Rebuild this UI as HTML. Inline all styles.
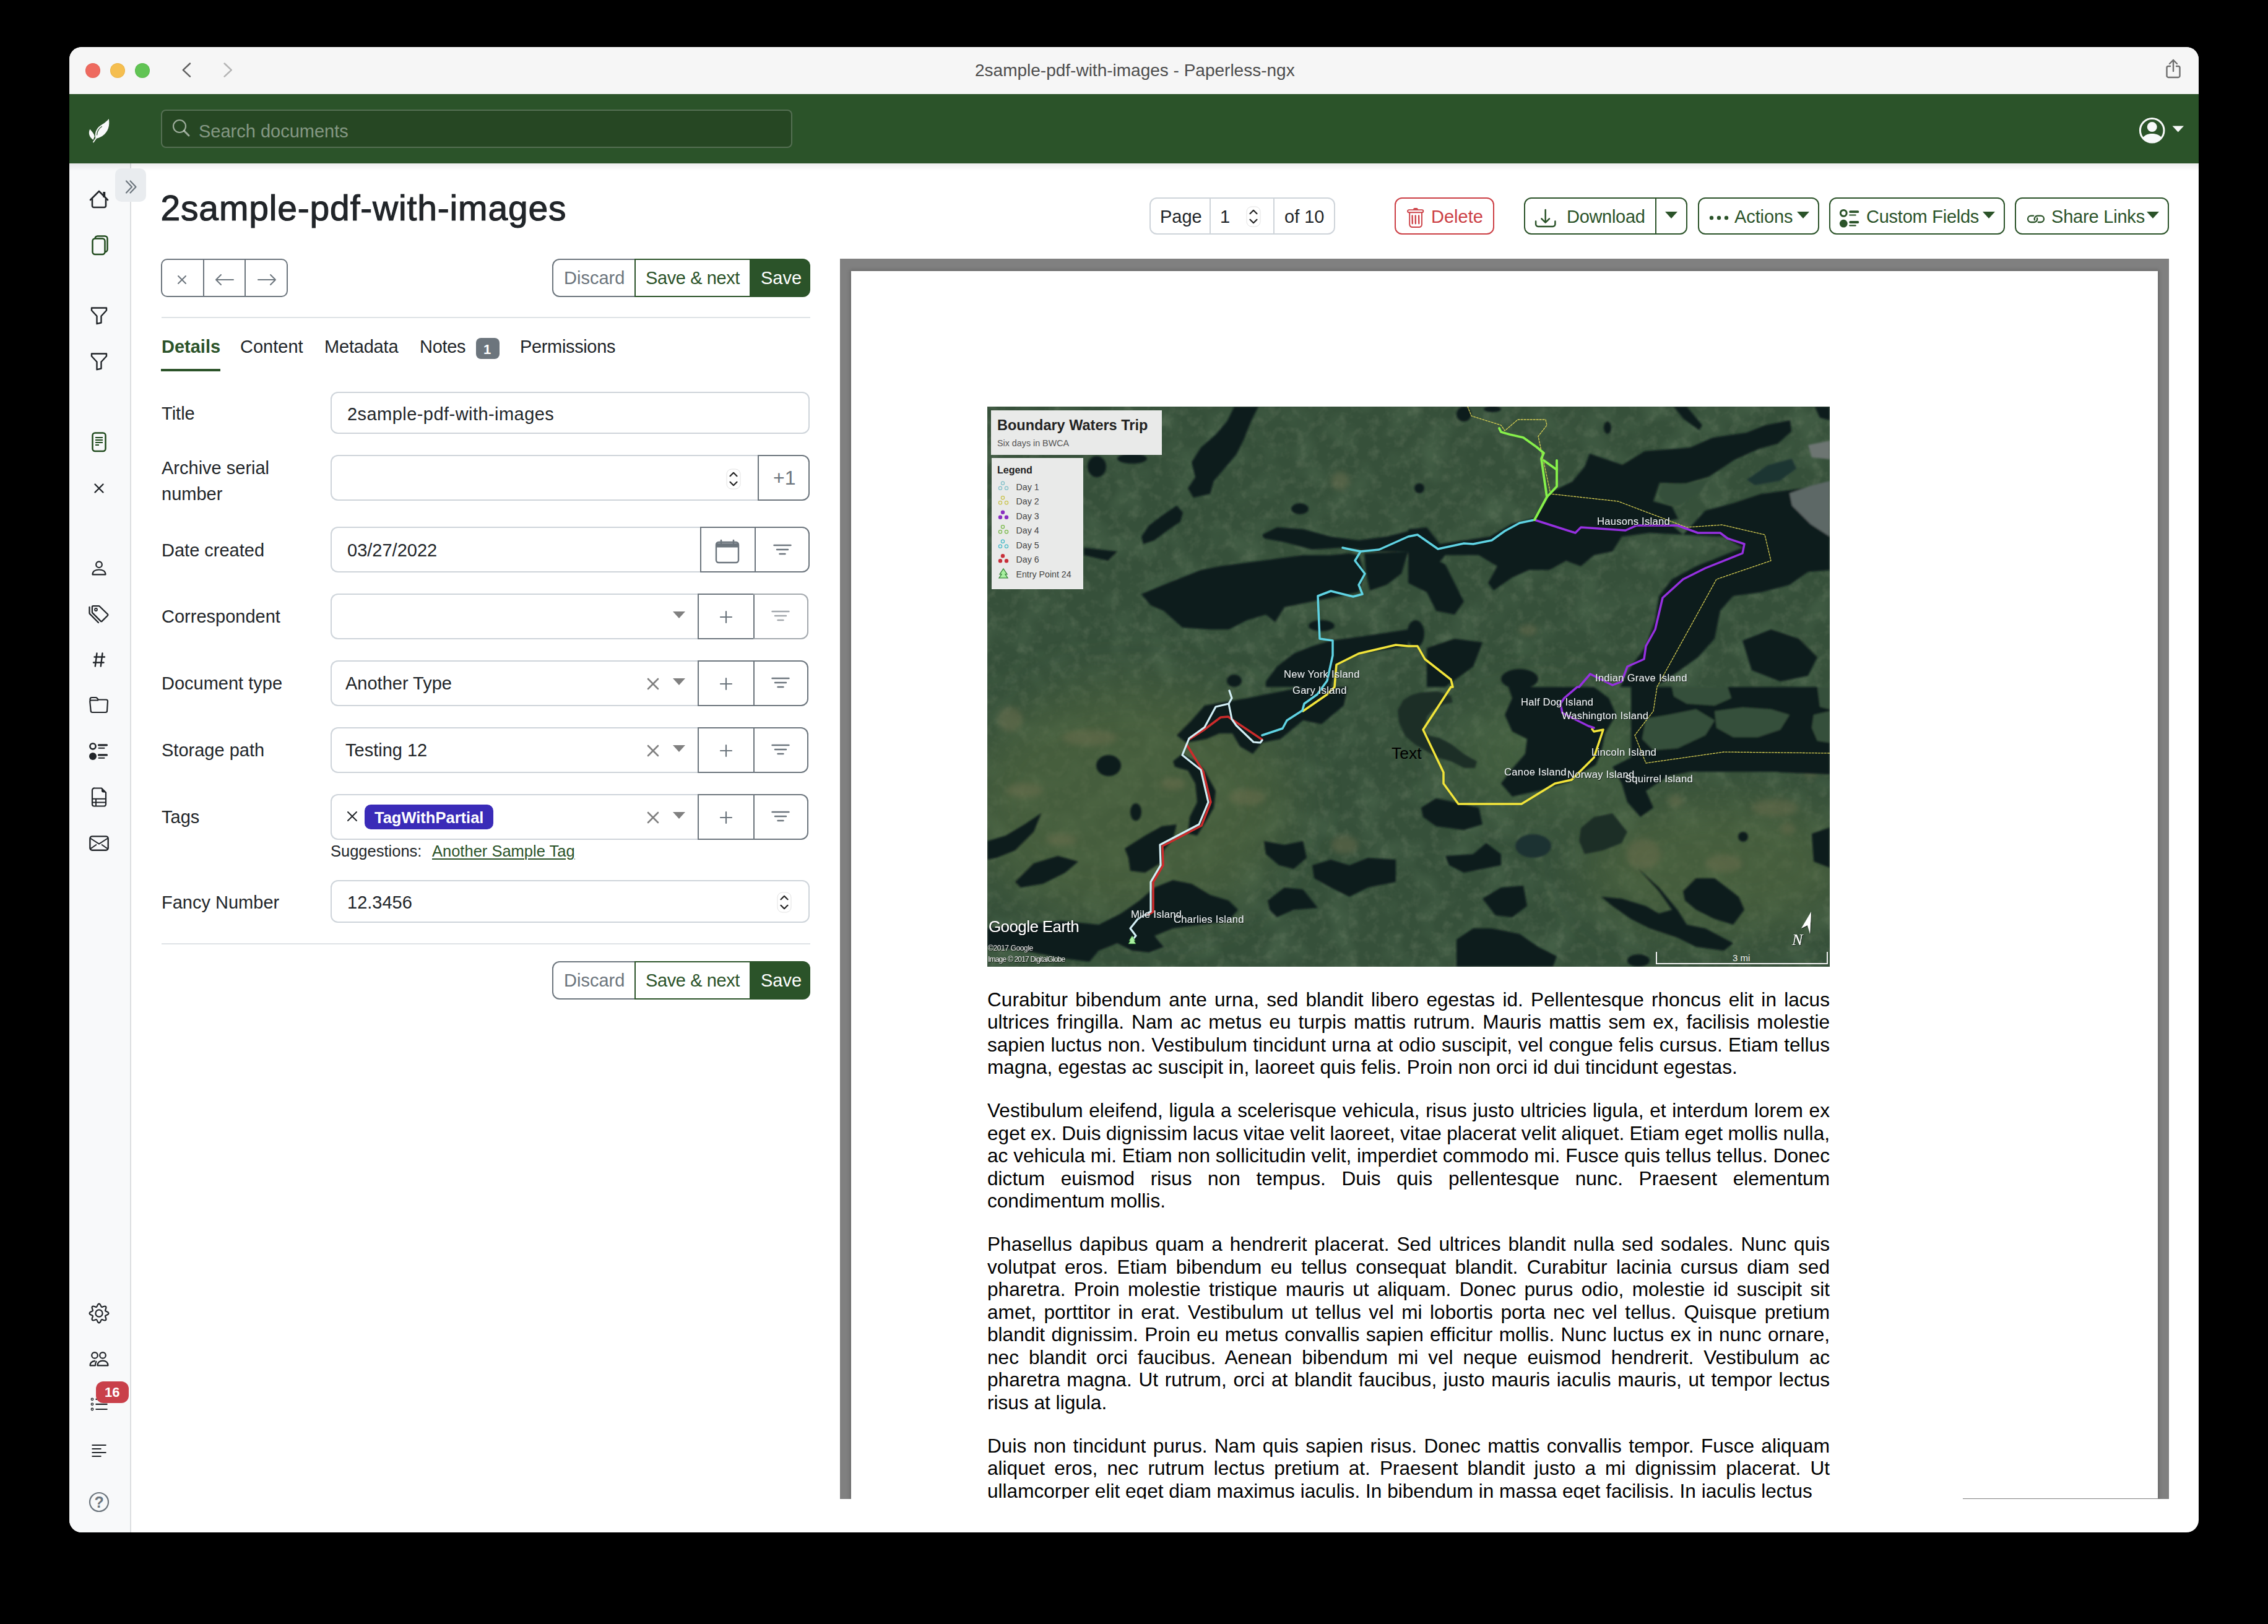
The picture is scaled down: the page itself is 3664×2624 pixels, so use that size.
<!DOCTYPE html><html><head><meta charset="utf-8"><style>
html,body{margin:0;padding:0;}
body{width:3664px;height:2624px;background:#000;overflow:hidden;position:relative;font-family:"Liberation Sans", sans-serif;}
.a{position:absolute;box-sizing:border-box;}
.t{position:absolute;white-space:nowrap;}
#win{position:absolute;left:112px;top:76px;width:3440px;height:2400px;border-radius:20px;overflow:hidden;background:#fff;}
#inner{position:absolute;left:-112px;top:-76px;width:3664px;height:2624px;}
</style></head><body><div id="win"><div id="inner">

<div class="a" style="left:112px;top:76px;width:3440px;height:76px;background:#f6f6f6;"></div>
<div class="a" style="left:138px;top:102px;width:24px;height:24px;border-radius:50%;background:#ee6a5f;box-shadow:inset 0 0 0 1px #d25a5055;"></div>
<div class="a" style="left:178px;top:102px;width:24px;height:24px;border-radius:50%;background:#f5be4f;box-shadow:inset 0 0 0 1px #d8a23c55;"></div>
<div class="a" style="left:218px;top:102px;width:24px;height:24px;border-radius:50%;background:#61c454;box-shadow:inset 0 0 0 1px #50a84355;"></div>
<svg class="a" style="left:290px;top:98px;" width="24" height="32" viewBox="0 0 24 32"><path d="M17 4.5 L5.8 15.1 L17 25.7" fill="none" stroke="#5f5f5f" stroke-width="2.5" stroke-linecap="round" stroke-linejoin="round"/></svg>
<svg class="a" style="left:356px;top:98px;" width="24" height="32" viewBox="0 0 24 32"><path d="M6.6 4.5 L17.8 15.1 L6.6 25.7" fill="none" stroke="#b4b4b4" stroke-width="2.5" stroke-linecap="round" stroke-linejoin="round"/></svg>
<div class="t" style="left:1575px;top:100.3px;font-size:28px;line-height:28px;color:#4d4d4d;font-weight:400;">2sample-pdf-with-images - Paperless-ngx</div>
<svg class="a" style="left:3496px;top:94px;" width="30" height="36" viewBox="0 0 30 36"><path d="M15 3 V21 M9 9 L15 3 L21 9" fill="none" stroke="#6e6e6e" stroke-width="2.4" stroke-linecap="round" stroke-linejoin="round"/><path d="M10 13 H7 a2.5 2.5 0 0 0 -2.5 2.5 V28.5 a2.5 2.5 0 0 0 2.5 2.5 H23 a2.5 2.5 0 0 0 2.5 -2.5 V15.5 a2.5 2.5 0 0 0 -2.5 -2.5 H20" fill="none" stroke="#6e6e6e" stroke-width="2.4" stroke-linecap="round"/></svg>
<div class="a" style="left:112px;top:152px;width:3440px;height:112px;background:#2b5329;"></div>
<div class="a" style="left:260px;top:177px;width:1020px;height:62px;background:#264723;border:2px solid rgba(255,255,255,0.22);border-radius:8px;"></div>
<div class="t" style="left:321px;top:197.5px;font-size:29px;line-height:29px;color:rgba(255,255,255,0.45);font-weight:400;">Search documents</div>
<svg class="a" style="left:278px;top:192px;" width="30" height="30" viewBox="0 0 30 30"><circle cx="12" cy="12" r="10" fill="none" stroke="rgba(255,255,255,0.55)" stroke-width="2.2"/><path d="M19.5 19.5 L27 27" stroke="rgba(255,255,255,0.55)" stroke-width="3" stroke-linecap="round"/></svg>
<div class="a" style="left:112px;top:264px;width:100px;height:2212px;background:#f8f9fa;border-right:2px solid #dcdee0;"></div>
<div class="a" style="left:112px;top:264px;width:3440px;height:12px;background:linear-gradient(rgba(0,0,0,0.07),rgba(0,0,0,0));"></div>
<div class="a" style="left:186px;top:272px;width:50px;height:54px;background:#e9ecef;border-radius:10px;"></div>
<svg class="a" style="left:200px;top:290px;" width="26" height="24" viewBox="0 0 26 24"><path d="M4 2.5 L13 12 L4 21.5 M10.5 2.5 L19.5 12 L10.5 21.5" fill="none" stroke="#6c757d" stroke-width="2.2" stroke-linecap="round" stroke-linejoin="round"/></svg>
<svg class="a" style="left:140px;top:304px;" width="40" height="36" viewBox="0 0 40 36"><path d="M6 19 L20 5 L34 19" fill="none" stroke="#212529" stroke-width="2.6" stroke-linecap="round" stroke-linejoin="round"/><path d="M9 17 V28.5 a2.5 2.5 0 0 0 2.5 2.5 H28.5 a2.5 2.5 0 0 0 2.5 -2.5 V17" fill="none" stroke="#212529" stroke-width="2.6"/><rect x="26.4" y="6" width="3.8" height="9" fill="#212529"/></svg>
<svg class="a" style="left:140px;top:374px;" width="40" height="42" viewBox="0 0 40 42"><rect x="13.5" y="7.5" width="20" height="25.5" rx="4" fill="none" stroke="#1f4a1c" stroke-width="2.5"/><rect x="9.5" y="11.5" width="20" height="25.5" rx="4" fill="#f8f9fa" stroke="#1f4a1c" stroke-width="2.5"/></svg>
<svg class="a" style="left:140px;top:492px;" width="40" height="34" viewBox="0 0 40 34"><path d="M8 5.5 H32 V9.5 L23.5 18.8 V29.5 L16.5 31.2 V18.8 L8 9.5 Z" fill="none" stroke="#212529" stroke-width="2.4" stroke-linejoin="round"/></svg>
<svg class="a" style="left:140px;top:566px;" width="40" height="34" viewBox="0 0 40 34"><path d="M8 5.5 H32 V9.5 L23.5 18.8 V29.5 L16.5 31.2 V18.8 L8 9.5 Z" fill="none" stroke="#212529" stroke-width="2.4" stroke-linejoin="round"/></svg>
<svg class="a" style="left:140px;top:694px;" width="40" height="40" viewBox="0 0 40 40"><rect x="9.5" y="5.5" width="21" height="29.5" rx="4" fill="none" stroke="#1f4a1c" stroke-width="2.5"/><path d="M14 13 H26 M14 17 H26 M14 21 H26 M14 25 H20" stroke="#1f4a1c" stroke-width="2"/></svg>
<svg class="a" style="left:140px;top:776px;" width="40" height="26" viewBox="0 0 40 26"><path d="M13.5 6.5 L26.5 19.5 M26.5 6.5 L13.5 19.5" stroke="#212529" stroke-width="2.4" stroke-linecap="round"/></svg>
<svg class="a" style="left:140px;top:900px;" width="40" height="34" viewBox="0 0 40 34"><circle cx="20" cy="12.2" r="4.8" fill="none" stroke="#212529" stroke-width="2.2"/><path d="M9.5 28.3 C9.5 23, 14 20.5, 20 20.5 C26 20.5, 30.5 23, 30.5 28.3 Z" fill="none" stroke="#212529" stroke-width="2.2" stroke-linejoin="round"/></svg>
<svg class="a" style="left:140px;top:972px;" width="40" height="40" viewBox="0 0 40 40"><path d="M10.5 7.1 H19.5 a2 2 0 0 1 1.4 0.6 L34 20.5 a1.5 1.5 0 0 1 0 2 L24.8 31.6 a1.5 1.5 0 0 1 -2.1 0 L9.5 18.4 a2 2 0 0 1 -0.6 -1.4 V8.7 a1.6 1.6 0 0 1 1.6 -1.6 Z" fill="none" stroke="#212529" stroke-width="2.3" stroke-linejoin="round"/><circle cx="15" cy="13" r="2" fill="none" stroke="#212529" stroke-width="1.8"/><path d="M4.5 8.8 V18.5 a2 2 0 0 0 0.6 1.4 L19 34" fill="none" stroke="#212529" stroke-width="2.3" stroke-linecap="round"/></svg>
<svg class="a" style="left:140px;top:1050px;" width="40" height="32" viewBox="0 0 40 32"><path d="M16.5 5.5 L13.8 26.5 M25.5 5.5 L22.8 26.5 M12.5 11.5 H29 M11 20.5 H27.5" stroke="#212529" stroke-width="2.4" stroke-linecap="round"/></svg>
<svg class="a" style="left:140px;top:1122px;" width="40" height="34" viewBox="0 0 40 34"><path d="M5.5 10 V8 a3 3 0 0 1 3 -3 H14.5 a3 3 0 0 1 2.2 1 L19 8.5 H31.5 a2.5 2.5 0 0 1 2.5 2.7 L33 26.5 a2.5 2.5 0 0 1 -2.5 2.5 H9.2 a2.5 2.5 0 0 1 -2.5 -2.3 L5.3 12 a2 2 0 0 1 2 -2.5 H19" fill="none" stroke="#212529" stroke-width="2.2" stroke-linejoin="round"/></svg>
<svg class="a" style="left:140px;top:1196px;" width="40" height="36" viewBox="0 0 40 36"><circle cx="10" cy="9.8" r="4.6" fill="none" stroke="#212529" stroke-width="2.6"/><circle cx="10" cy="25.9" r="6" fill="#212529"/><path d="M19.5 7.8 H32.5 M19.5 23.9 H32.5" stroke="#212529" stroke-width="3.2" stroke-linecap="round"/><path d="M19.5 12.7 H28.5 M19.5 28.8 H28.5" stroke="#212529" stroke-width="2" stroke-linecap="round"/></svg>
<svg class="a" style="left:140px;top:1268px;" width="40" height="40" viewBox="0 0 40 40"><path d="M13 5.5 H24 L31 12.5 V31.5 a3 3 0 0 1 -3 3 H12 a3 3 0 0 1 -3 -3 V9 a3.5 3.5 0 0 1 4 -3.5 Z" fill="none" stroke="#212529" stroke-width="2.2" stroke-linejoin="round"/><path d="M24 5.5 V9.5 a3 3 0 0 0 3 3 H31 Z" fill="#212529"/><path d="M9 22.7 H31 M9 28.6 H31 M15 22.7 V34.5" stroke="#212529" stroke-width="2"/></svg>
<svg class="a" style="left:140px;top:1346px;" width="40" height="32" viewBox="0 0 40 32"><rect x="5.4" y="5.4" width="29.3" height="22.4" rx="3.5" fill="none" stroke="#212529" stroke-width="2.4"/><path d="M6 8.5 L20 17.5 L34 8.5 M6 25.5 L16 18.5 M34 25.5 L24 18.5" fill="none" stroke="#212529" stroke-width="2"/></svg>
<svg class="a" style="left:140px;top:2102px;" width="40" height="40" viewBox="0 0 40 40"><polygon points="20.00,4.50 21.45,5.25 22.58,7.05 23.36,8.92 24.17,9.93 25.46,9.79 27.33,9.02 29.41,8.54 30.96,9.04 31.46,10.59 30.98,12.67 30.21,14.54 30.07,15.83 31.08,16.64 32.95,17.42 34.75,18.55 35.50,20.00 34.75,21.45 32.95,22.58 31.08,23.36 30.07,24.17 30.21,25.46 30.98,27.33 31.46,29.41 30.96,30.96 29.41,31.46 27.33,30.98 25.46,30.21 24.17,30.07 23.36,31.08 22.58,32.95 21.45,34.75 20.00,35.50 18.55,34.75 17.42,32.95 16.64,31.08 15.83,30.07 14.54,30.21 12.67,30.98 10.59,31.46 9.04,30.96 8.54,29.41 9.02,27.33 9.79,25.46 9.93,24.17 8.92,23.36 7.05,22.58 5.25,21.45 4.50,20.00 5.25,18.55 7.05,17.42 8.92,16.64 9.93,15.83 9.79,14.54 9.02,12.67 8.54,10.59 9.04,9.04 10.59,8.54 12.67,9.02 14.54,9.79 15.83,9.93 16.64,8.92 17.42,7.05 18.55,5.25" fill="none" stroke="#212529" stroke-width="2.2" stroke-linejoin="round"/><circle cx="20" cy="20" r="5.6" fill="none" stroke="#212529" stroke-width="2.2"/></svg>
<svg class="a" style="left:140px;top:2178px;" width="40" height="34" viewBox="0 0 40 34"><circle cx="13" cy="11.9" r="4.8" fill="none" stroke="#212529" stroke-width="2.2"/><circle cx="26" cy="11.9" r="4.8" fill="none" stroke="#212529" stroke-width="2.2"/><path d="M17.5 28.3 C17.5 23.5, 21 20.6, 26 20.6 C31 20.6, 34.5 23.5, 34.5 28.3 Z" fill="none" stroke="#212529" stroke-width="2.2" stroke-linejoin="round"/><path d="M14 20.8 C8.5 21.3, 5.5 24, 5.5 28.3 H14 C14 25, 14.5 23, 16 21.3" fill="none" stroke="#212529" stroke-width="2.2" stroke-linejoin="round"/></svg>
<svg class="a" style="left:140px;top:2250px;" width="40" height="36" viewBox="0 0 40 36"><circle cx="9" cy="10.8" r="1.7" fill="none" stroke="#212529" stroke-width="1.4"/><circle cx="9" cy="18.8" r="1.7" fill="none" stroke="#212529" stroke-width="1.4"/><circle cx="9" cy="27" r="1.7" fill="none" stroke="#212529" stroke-width="1.4"/><path d="M14.5 10.8 H33.5 M14.5 18.8 H33.5 M14.5 27 H33.5" stroke="#212529" stroke-width="2.2"/></svg>
<div class="a" style="left:155px;top:2232px;width:53px;height:35px;background:#c9404a;border-radius:12px;"></div>
<div class="t" style="left:169px;top:2238.9px;font-size:22px;line-height:22px;color:#fff;font-weight:700;">16</div>
<svg class="a" style="left:140px;top:2328px;" width="40" height="32" viewBox="0 0 40 32"><path d="M8.5 7 H31.5 M8.5 13 H23.5 M8.5 19 H31.5 M8.5 25 H23.5" stroke="#212529" stroke-width="2.2"/></svg>
<svg class="a" style="left:140px;top:2407px;" width="40" height="40" viewBox="0 0 40 40"><circle cx="20" cy="20" r="15" fill="none" stroke="#6c757d" stroke-width="2.2"/></svg>
<div class="t" style="left:152.5px;top:2414.8px;font-size:25px;line-height:25px;color:#6c757d;font-weight:700;">?</div>
<svg class="a" style="left:135px;top:180px;" width="50" height="60" viewBox="0 0 50 60"><path d="M19.5 43.8 C17.5 36, 20 28, 27 23 C31.5 20, 36.5 17.5, 40.8 12 C42.5 22, 40.5 33, 30 40 C26 42.5, 22.5 43.5, 19.5 43.8 Z" fill="#f8f9fa"/><path d="M21.5 38.5 C22 32, 25 27, 29.8 24.3" fill="none" stroke="#2b5329" stroke-width="1.2"/><path d="M10.3 28.8 C7.5 34, 8.5 41, 15.5 46 L17.8 40.5 C17 36, 14 33, 10.3 28.8 Z" fill="#f8f9fa"/><path d="M15.9 49.5 L20.5 43" stroke="#f8f9fa" stroke-width="1.8" stroke-linecap="round"/></svg>
<svg class="a" style="left:3452px;top:186px;" width="50" height="50" viewBox="0 0 50 50"><defs><clipPath id="uc"><circle cx="24.7" cy="24.8" r="19.3"/></clipPath></defs><circle cx="24.7" cy="24.8" r="19.3" fill="none" stroke="#f8f9fa" stroke-width="3"/><circle cx="24.7" cy="19.1" r="8" fill="#f8f9fa"/><path d="M6 45 L10.4 35.6 C14 31.5, 19 30, 24.7 29.9 C30.5 30, 35.5 31.5, 39.6 35.6 L44 45 Z" fill="#f8f9fa" clip-path="url(#uc)"/></svg>
<svg class="a" style="left:3508px;top:202px;" width="22" height="13" viewBox="0 0 22 13"><path d="M1.5 1.5 H20 L10.75 11.5 Z" fill="#f8f9fa"/></svg>
<div class="t" style="left:259.5px;top:307.7px;font-size:57px;line-height:57px;color:#212529;font-weight:400;letter-spacing:0.83px;-webkit-text-stroke:1.1px #212529;">2sample-pdf-with-images</div>
<div class="a" style="left:260px;top:418px;width:205px;height:62px;border:2px solid #6c757d;border-radius:10px;"></div>
<div class="a" style="left:328px;top:418px;width:2px;height:62px;background:#6c757d;"></div>
<div class="a" style="left:395px;top:418px;width:2px;height:62px;background:#6c757d;"></div>
<svg class="a" style="left:282px;top:440px;" width="24" height="24" viewBox="0 0 24 24"><path d="M6 6 L18 18 M18 6 L6 18" stroke="#6c757d" stroke-width="2" stroke-linecap="round"/></svg>
<svg class="a" style="left:346px;top:439px;" width="34" height="26" viewBox="0 0 34 26"><path d="M31 13 H3 M11 5 L3 13 L11 21" fill="none" stroke="#6c757d" stroke-width="2" stroke-linecap="round" stroke-linejoin="round"/></svg>
<svg class="a" style="left:414px;top:439px;" width="34" height="26" viewBox="0 0 34 26"><path d="M3 13 H31 M23 5 L31 13 L23 21" fill="none" stroke="#6c757d" stroke-width="2" stroke-linecap="round" stroke-linejoin="round"/></svg>
<div class="a" style="left:892px;top:418px;width:135px;height:62px;border:2px solid #6c757d;border-radius:12px 0 0 12px;"></div>
<div class="a" style="left:1025px;top:418px;width:188px;height:62px;border:2px solid #2b5329;"></div>
<div class="a" style="left:1211px;top:418px;width:98px;height:62px;background:#2b5329;border-radius:0 12px 12px 0;"></div>
<div class="t" style="left:911px;top:435.0px;font-size:29px;line-height:29px;color:#6c757d;font-weight:400;">Discard</div>
<div class="t" style="left:1043px;top:435.0px;font-size:29px;line-height:29px;color:#2b5329;font-weight:400;letter-spacing:-0.4px;">Save &amp; next</div>
<div class="t" style="left:1229px;top:435.0px;font-size:29px;line-height:29px;color:#fff;font-weight:400;">Save</div>
<div class="a" style="left:261px;top:512px;width:1048px;height:2px;background:#dee2e6;"></div>
<div class="t" style="left:261px;top:546.0px;font-size:29px;line-height:29px;color:#2b5329;font-weight:700;">Details</div>
<div class="a" style="left:260px;top:596px;width:96px;height:4px;background:#2b5329;"></div>
<div class="t" style="left:388px;top:546.0px;font-size:29px;line-height:29px;color:#212529;font-weight:400;">Content</div>
<div class="t" style="left:524px;top:546.0px;font-size:29px;line-height:29px;color:#212529;font-weight:400;letter-spacing:-0.2px;">Metadata</div>
<div class="t" style="left:678px;top:546.0px;font-size:29px;line-height:29px;color:#212529;font-weight:400;letter-spacing:-0.3px;">Notes</div>
<div class="a" style="left:769px;top:546px;width:38px;height:34px;background:#6c757d;border-radius:8px;"></div>
<div class="t" style="left:781px;top:554.4px;font-size:22px;line-height:22px;color:#fff;font-weight:700;">1</div>
<div class="t" style="left:840px;top:546.0px;font-size:29px;line-height:29px;color:#212529;font-weight:400;letter-spacing:-0.35px;">Permissions</div>
<div class="t" style="left:261px;top:653.5px;font-size:29px;line-height:29px;color:#212529;font-weight:400;">Title</div>
<div class="a" style="left:534px;top:633px;width:774px;height:68px;border:2px solid #ced4da;border-radius:12px;"></div>
<div class="t" style="left:561px;top:654.5px;font-size:29px;line-height:29px;color:#212529;font-weight:400;letter-spacing:0.45px;">2sample-pdf-with-images</div>
<div class="t" style="left:261px;top:742.0px;font-size:29px;line-height:29px;color:#212529;font-weight:400;">Archive serial</div>
<div class="t" style="left:261px;top:783.5px;font-size:29px;line-height:29px;color:#212529;font-weight:400;">number</div>
<div class="a" style="left:534px;top:735px;width:692px;height:74px;border:2px solid #ced4da;border-right:none;border-radius:12px 0 0 12px;"></div>
<div class="a" style="left:1224px;top:735px;width:84px;height:74px;border:2px solid #6c757d;border-radius:0 12px 12px 0;"></div>
<div class="t" style="left:1249px;top:755.9px;font-size:32px;line-height:32px;color:#6c757d;font-weight:400;">+1</div>
<svg class="a" style="left:1173px;top:757px;" width="24" height="34" viewBox="0 0 24 34"><rect x="1" y="1" width="22" height="32" rx="8" fill="#fff" stroke="#e2e2e2" stroke-width="1"/><path d="M6.5 12.2 L12 6.8 L17.5 12.2 M6.5 21.8 L12 27.2 L17.5 21.8" fill="none" stroke="#222" stroke-width="2.2" stroke-linecap="round" stroke-linejoin="round"/></svg>
<div class="t" style="left:261px;top:875.0px;font-size:29px;line-height:29px;color:#212529;font-weight:400;">Date created</div>
<div class="a" style="left:534px;top:851px;width:599px;height:74px;border:2px solid #ced4da;border-right:none;border-radius:12px 0 0 12px;"></div>
<div class="a" style="left:1131px;top:851px;width:90px;height:74px;border:2px solid #6c757d;border-radius:0;"></div>
<div class="a" style="left:1219px;top:851px;width:89px;height:74px;border:2px solid #6c757d;border-radius:0 12px 12px 0;"></div>
<div class="t" style="left:561px;top:875.0px;font-size:29px;line-height:29px;color:#212529;font-weight:400;">03/27/2022</div>
<svg class="a" style="left:1154px;top:868px;" width="42" height="44" viewBox="0 0 42 44"><rect x="3" y="8" width="36" height="33" rx="4" fill="none" stroke="#6c757d" stroke-width="2.4"/><path d="M3.5 13 H38.5" stroke="#6c757d" stroke-width="7"/><path d="M11 5 V9 M31 5 V9" stroke="#6c757d" stroke-width="2.6" stroke-linecap="round"/></svg>
<svg class="a" style="left:1248px;top:878px;" width="32" height="20" viewBox="0 0 32 20"><path d="M2.5 3 H29.5 M7 10 H25 M11.5 17 H20.5" stroke="#6c757d" stroke-width="2.4" stroke-linecap="round"/></svg>
<div class="t" style="left:261px;top:981.5px;font-size:29px;line-height:29px;color:#212529;font-weight:400;">Correspondent</div>
<div class="a" style="left:534px;top:959px;width:595px;height:74px;border:2px solid #ced4da;border-right:none;border-radius:12px 0 0 12px;"></div>
<div class="a" style="left:1127px;top:959px;width:92px;height:74px;border:2px solid #6c757d;border-radius:0;"></div>
<div class="a" style="left:1217px;top:959px;width:89px;height:74px;border:2px solid #a3a8ad;border-left:none;border-radius:0 12px 12px 0;"></div>
<svg class="a" style="left:1162px;top:986.0px;" width="22" height="22" viewBox="0 0 22 22"><path d="M11 2 V20 M2 11 H20" stroke="#6c757d" stroke-width="2.2" stroke-linecap="round"/></svg>
<svg class="a" style="left:1245px;top:985.0px;" width="32" height="20" viewBox="0 0 32 20"><path d="M2.5 3 H29.5 M7 10 H25 M11.5 17 H20.5" stroke="#a3a8ad" stroke-width="2.4" stroke-linecap="round"/></svg>
<svg class="a" style="left:1087px;top:988.0px;" width="20" height="12" viewBox="0 0 20 12"><path d="M0 0 H20 L10 11 Z" fill="#808080"/></svg>
<div class="t" style="left:261px;top:1089.5px;font-size:29px;line-height:29px;color:#212529;font-weight:400;">Document type</div>
<div class="a" style="left:534px;top:1067px;width:595px;height:74px;border:2px solid #ced4da;border-right:none;border-radius:12px 0 0 12px;"></div>
<div class="a" style="left:1127px;top:1067px;width:92px;height:74px;border:2px solid #6c757d;border-radius:0;"></div>
<div class="a" style="left:1217px;top:1067px;width:89px;height:74px;border:2px solid #6c757d;border-left:none;border-radius:0 12px 12px 0;"></div>
<svg class="a" style="left:1162px;top:1094.0px;" width="22" height="22" viewBox="0 0 22 22"><path d="M11 2 V20 M2 11 H20" stroke="#6c757d" stroke-width="2.2" stroke-linecap="round"/></svg>
<svg class="a" style="left:1245px;top:1093.0px;" width="32" height="20" viewBox="0 0 32 20"><path d="M2.5 3 H29.5 M7 10 H25 M11.5 17 H20.5" stroke="#6c757d" stroke-width="2.4" stroke-linecap="round"/></svg>
<svg class="a" style="left:1087px;top:1096.0px;" width="20" height="12" viewBox="0 0 20 12"><path d="M0 0 H20 L10 11 Z" fill="#808080"/></svg>
<svg class="a" style="left:1045px;top:1095.0px;" width="20" height="20" viewBox="0 0 20 20"><path d="M2 2 L18 18 M18 2 L2 18" stroke="#808080" stroke-width="2.6" stroke-linecap="round"/></svg>
<div class="t" style="left:558px;top:1090.0px;font-size:29px;line-height:29px;color:#212529;font-weight:400;">Another Type</div>
<div class="t" style="left:261px;top:1197.5px;font-size:29px;line-height:29px;color:#212529;font-weight:400;">Storage path</div>
<div class="a" style="left:534px;top:1175px;width:595px;height:74px;border:2px solid #ced4da;border-right:none;border-radius:12px 0 0 12px;"></div>
<div class="a" style="left:1127px;top:1175px;width:92px;height:74px;border:2px solid #6c757d;border-radius:0;"></div>
<div class="a" style="left:1217px;top:1175px;width:89px;height:74px;border:2px solid #6c757d;border-left:none;border-radius:0 12px 12px 0;"></div>
<svg class="a" style="left:1162px;top:1202.0px;" width="22" height="22" viewBox="0 0 22 22"><path d="M11 2 V20 M2 11 H20" stroke="#6c757d" stroke-width="2.2" stroke-linecap="round"/></svg>
<svg class="a" style="left:1245px;top:1201.0px;" width="32" height="20" viewBox="0 0 32 20"><path d="M2.5 3 H29.5 M7 10 H25 M11.5 17 H20.5" stroke="#6c757d" stroke-width="2.4" stroke-linecap="round"/></svg>
<svg class="a" style="left:1087px;top:1204.0px;" width="20" height="12" viewBox="0 0 20 12"><path d="M0 0 H20 L10 11 Z" fill="#808080"/></svg>
<svg class="a" style="left:1045px;top:1203.0px;" width="20" height="20" viewBox="0 0 20 20"><path d="M2 2 L18 18 M18 2 L2 18" stroke="#808080" stroke-width="2.6" stroke-linecap="round"/></svg>
<div class="t" style="left:558px;top:1198.0px;font-size:29px;line-height:29px;color:#212529;font-weight:400;">Testing 12</div>
<div class="t" style="left:261px;top:1305.5px;font-size:29px;line-height:29px;color:#212529;font-weight:400;">Tags</div>
<div class="a" style="left:534px;top:1283px;width:595px;height:74px;border:2px solid #ced4da;border-right:none;border-radius:12px 0 0 12px;"></div>
<div class="a" style="left:1127px;top:1283px;width:92px;height:74px;border:2px solid #6c757d;border-radius:0;"></div>
<div class="a" style="left:1217px;top:1283px;width:89px;height:74px;border:2px solid #6c757d;border-left:none;border-radius:0 12px 12px 0;"></div>
<svg class="a" style="left:1162px;top:1310.0px;" width="22" height="22" viewBox="0 0 22 22"><path d="M11 2 V20 M2 11 H20" stroke="#6c757d" stroke-width="2.2" stroke-linecap="round"/></svg>
<svg class="a" style="left:1245px;top:1309.0px;" width="32" height="20" viewBox="0 0 32 20"><path d="M2.5 3 H29.5 M7 10 H25 M11.5 17 H20.5" stroke="#6c757d" stroke-width="2.4" stroke-linecap="round"/></svg>
<svg class="a" style="left:1087px;top:1312.0px;" width="20" height="12" viewBox="0 0 20 12"><path d="M0 0 H20 L10 11 Z" fill="#808080"/></svg>
<svg class="a" style="left:1045px;top:1311.0px;" width="20" height="20" viewBox="0 0 20 20"><path d="M2 2 L18 18 M18 2 L2 18" stroke="#808080" stroke-width="2.6" stroke-linecap="round"/></svg>
<svg class="a" style="left:559px;top:1309px;" width="20" height="20" viewBox="0 0 20 20"><path d="M3 3 L17 17 M17 3 L3 17" stroke="#212529" stroke-width="2" stroke-linecap="round"/></svg>
<div class="a" style="left:589px;top:1300px;width:208px;height:40px;background:#3a2bb8;border-radius:10px;"></div>
<div class="t" style="left:605px;top:1309.4px;font-size:25.5px;line-height:25.5px;color:#fff;font-weight:700;">TagWithPartial</div>
<div class="t" style="left:534px;top:1363.0px;font-size:25.5px;line-height:25.5px;color:#212529;font-weight:400;">Suggestions:</div>
<div class="t" style="left:698px;top:1363.0px;font-size:25.5px;line-height:25.5px;color:#2b5329;font-weight:400;"><u style="text-underline-offset:3px;text-decoration-thickness:2px;">Another Sample Tag</u></div>
<div class="t" style="left:261px;top:1443.5px;font-size:29px;line-height:29px;color:#212529;font-weight:400;">Fancy Number</div>
<div class="a" style="left:534px;top:1422px;width:774px;height:69px;border:2px solid #ced4da;border-radius:12px;"></div>
<div class="t" style="left:561px;top:1444.0px;font-size:29px;line-height:29px;color:#212529;font-weight:400;">12.3456</div>
<svg class="a" style="left:1255px;top:1441px;" width="24" height="34" viewBox="0 0 24 34"><rect x="1" y="1" width="22" height="32" rx="8" fill="#fff" stroke="#e2e2e2" stroke-width="1"/><path d="M6.5 12.2 L12 6.8 L17.5 12.2 M6.5 21.8 L12 27.2 L17.5 21.8" fill="none" stroke="#222" stroke-width="2.2" stroke-linecap="round" stroke-linejoin="round"/></svg>
<div class="a" style="left:261px;top:1524px;width:1048px;height:2px;background:#dee2e6;"></div>
<div class="a" style="left:892px;top:1553px;width:135px;height:62px;border:2px solid #6c757d;border-radius:12px 0 0 12px;"></div>
<div class="a" style="left:1025px;top:1553px;width:188px;height:62px;border:2px solid #2b5329;"></div>
<div class="a" style="left:1211px;top:1553px;width:98px;height:62px;background:#2b5329;border-radius:0 12px 12px 0;"></div>
<div class="t" style="left:911px;top:1570.0px;font-size:29px;line-height:29px;color:#6c757d;font-weight:400;">Discard</div>
<div class="t" style="left:1043px;top:1570.0px;font-size:29px;line-height:29px;color:#2b5329;font-weight:400;letter-spacing:-0.4px;">Save &amp; next</div>
<div class="t" style="left:1229px;top:1570.0px;font-size:29px;line-height:29px;color:#fff;font-weight:400;">Save</div>
<div class="a" style="left:1857px;top:319px;width:300px;height:60px;border:2px solid #ced4da;border-radius:12px;"></div>
<div class="a" style="left:1954px;top:319px;width:2px;height:60px;background:#ced4da;"></div>
<div class="a" style="left:2057px;top:319px;width:2px;height:60px;background:#ced4da;"></div>
<div class="t" style="left:1874px;top:336.0px;font-size:29px;line-height:29px;color:#212529;font-weight:400;">Page</div>
<div class="t" style="left:1971px;top:336.0px;font-size:29px;line-height:29px;color:#212529;font-weight:400;">1</div>
<svg class="a" style="left:2013px;top:333px;" width="24" height="34" viewBox="0 0 24 34"><rect x="1" y="1" width="22" height="32" rx="8" fill="#fff" stroke="#e2e2e2" stroke-width="1"/><path d="M6.5 12.2 L12 6.8 L17.5 12.2 M6.5 21.8 L12 27.2 L17.5 21.8" fill="none" stroke="#222" stroke-width="2.2" stroke-linecap="round" stroke-linejoin="round"/></svg>
<div class="t" style="left:2075px;top:336.0px;font-size:29px;line-height:29px;color:#212529;font-weight:400;">of 10</div>
<div class="a" style="left:2253px;top:319px;width:161px;height:60px;border:2px solid #cc3f45;border-radius:12px;"></div>
<svg class="a" style="left:2270px;top:333px;" width="34" height="38" viewBox="0 0 34 38"><rect x="4.1" y="6.1" width="25.2" height="4.2" rx="2.1" fill="none" stroke="#cc3f45" stroke-width="1.9"/><path d="M12.8 5.4 C13.2 3.6, 14.3 3, 17 3 C19.7 3, 20.8 3.6, 21.2 5.4 Z" fill="#cc3f45"/><path d="M7.2 11 V29.6 a4.4 4.4 0 0 0 4.4 4.4 H22.6 a4.4 4.4 0 0 0 4.4 -4.4 V11" fill="none" stroke="#cc3f45" stroke-width="1.9"/><path d="M11.6 15.3 L11.8 28.3 M16.7 15.3 L16.9 28.3 M22.1 15.3 L22.3 28.3" stroke="#cc3f45" stroke-width="2.3" stroke-linecap="round"/></svg>
<div class="t" style="left:2312px;top:336.0px;font-size:29px;line-height:29px;color:#cc3f45;font-weight:400;">Delete</div>
<div class="a" style="left:2462px;top:319px;width:264px;height:60px;border:2px solid #2b5329;border-radius:12px;"></div>
<div class="a" style="left:2674px;top:319px;width:2px;height:60px;background:#2b5329;"></div>
<svg class="a" style="left:2479px;top:337px;" width="36" height="32" viewBox="0 0 36 32"><path d="M17.7 2 V22.5 M11.4 16.3 L17.7 22.6 L24 16.3" fill="none" stroke="#2b5329" stroke-width="2.5" stroke-linecap="round" stroke-linejoin="round"/><path d="M2.1 20.6 V25.3 a3.6 3.6 0 0 0 3.6 3.6 H29.8 a3.6 3.6 0 0 0 3.6 -3.6 V20.6" fill="none" stroke="#2b5329" stroke-width="2.5" stroke-linecap="round"/></svg>
<div class="t" style="left:2531px;top:336.0px;font-size:29px;line-height:29px;color:#2b5329;font-weight:400;letter-spacing:-0.3px;">Download</div>
<svg class="a" style="left:2690px;top:342px;" width="20" height="12" viewBox="0 0 20 12"><path d="M0 0 H20 L10 11 Z" fill="#2b5329"/></svg>
<div class="a" style="left:2743px;top:319px;width:196px;height:60px;border:2px solid #2b5329;border-radius:12px;"></div>
<svg class="a" style="left:2761px;top:347px;" width="32" height="10" viewBox="0 0 32 10"><circle cx="4" cy="5" r="3.2" fill="#2b5329"/><circle cx="16" cy="5" r="3.2" fill="#2b5329"/><circle cx="28" cy="5" r="3.2" fill="#2b5329"/></svg>
<div class="t" style="left:2802px;top:336.0px;font-size:29px;line-height:29px;color:#2b5329;font-weight:400;letter-spacing:-0.1px;">Actions</div>
<svg class="a" style="left:2903px;top:342px;" width="20" height="12" viewBox="0 0 20 12"><path d="M0 0 H20 L10 11 Z" fill="#2b5329"/></svg>
<div class="a" style="left:2955px;top:319px;width:284px;height:60px;border:2px solid #2b5329;border-radius:12px;"></div>
<svg class="a" style="left:2971px;top:337px;" width="34" height="32" viewBox="0 0 34 32"><circle cx="7.3" cy="7.4" r="4.9" fill="none" stroke="#2b5329" stroke-width="3"/><circle cx="7.3" cy="24.2" r="6.4" fill="#2b5329"/><path d="M18.1 5.2 H30.4 M18.1 22 H30.4" stroke="#2b5329" stroke-width="3.8" stroke-linecap="round"/><path d="M17.3 10.5 H26.7 M17.3 27.4 H26.7" stroke="#2b5329" stroke-width="2.2" stroke-linecap="round"/></svg>
<div class="t" style="left:3015px;top:336.0px;font-size:29px;line-height:29px;color:#2b5329;font-weight:400;letter-spacing:-0.25px;">Custom Fields</div>
<svg class="a" style="left:3203px;top:342px;" width="20" height="12" viewBox="0 0 20 12"><path d="M0 0 H20 L10 11 Z" fill="#2b5329"/></svg>
<div class="a" style="left:3255px;top:319px;width:249px;height:60px;border:2px solid #2b5329;border-radius:12px;"></div>
<svg class="a" style="left:3272px;top:344px;" width="34" height="18" viewBox="0 0 34 18"><path d="M13.2 4.6 H9.2 a5.2 5.2 0 0 0 0 10.4 H14 a5.2 5.2 0 0 0 5.1 -6.6" fill="none" stroke="#2b5329" stroke-width="2.3" stroke-linecap="round"/><path d="M20.8 15 H24.8 a5.2 5.2 0 0 0 0 -10.4 H20 a5.2 5.2 0 0 0 -5.1 6.6" fill="none" stroke="#2b5329" stroke-width="2.3" stroke-linecap="round"/></svg>
<div class="t" style="left:3314px;top:336.0px;font-size:29px;line-height:29px;color:#2b5329;font-weight:400;letter-spacing:-0.2px;">Share Links</div>
<svg class="a" style="left:3468px;top:342px;" width="20" height="12" viewBox="0 0 20 12"><path d="M0 0 H20 L10 11 Z" fill="#2b5329"/></svg>
<div class="a" style="left:1357px;top:418px;width:2147px;height:2004px;background:#808080;overflow:hidden;"></div>
<div class="a" style="left:1375px;top:438px;width:2111px;height:1984px;background:#fff;box-shadow:0 0 6px 2px rgba(0,0,0,0.18);clip-path:inset(-12px -12px 0 -12px);"></div>
<div class="a" style="left:3171px;top:2421px;width:315px;height:1px;background:#808080;"></div>
<svg class="a" style="left:1595px;top:657px;font-family:'Liberation Sans',sans-serif;" width="1361" height="905" viewBox="0 0 1361 905"><defs><filter id="tex" x="0" y="0" width="100%" height="100%"><feTurbulence type="fractalNoise" baseFrequency="0.06" numOctaves="3" seed="7"/><feColorMatrix type="matrix" values="0 0 0 0 0.42  0 0 0 0 0.45  0 0 0 0 0.32  0 0 0 1.6 -0.75"/></filter><filter id="tex2" x="0" y="0" width="100%" height="100%"><feTurbulence type="fractalNoise" baseFrequency="0.02" numOctaves="2" seed="3"/><feColorMatrix type="matrix" values="0 0 0 0 0.1  0 0 0 0 0.18  0 0 0 0 0.1  0 0 0 1.6 -0.7"/></filter><filter id="soft"><feGaussianBlur stdDeviation="1.6"/></filter><filter id="big" x="-50%" y="-50%" width="200%" height="200%"><feGaussianBlur stdDeviation="40"/></filter><filter id="soft2" x="-50%" y="-50%" width="200%" height="200%"><feGaussianBlur stdDeviation="5"/></filter><filter id="lbl" x="-10%" y="-30%" width="120%" height="160%"><feDropShadow dx="0.6" dy="0.8" stdDeviation="0.7" flood-color="#000" flood-opacity="0.95"/></filter></defs><rect x="0" y="0" width="1361" height="905" fill="#36503a"/><rect x="0" y="0" width="1361" height="905" filter="url(#tex2)" opacity="0.6"/><rect x="0" y="0" width="1361" height="905" filter="url(#tex)" opacity="0.22"/><g filter="url(#big)" opacity="0.55"><ellipse cx="230" cy="640" rx="260" ry="190" fill="#52693f"/><ellipse cx="1180" cy="740" rx="220" ry="110" fill="#53693f"/><ellipse cx="900" cy="560" rx="150" ry="90" fill="#4d6a45"/></g><g filter="url(#soft2)" fill="#6f6f50" opacity="0.45"><ellipse cx="874" cy="361" rx="15" ry="9"/><ellipse cx="1060" cy="723" rx="28" ry="25"/><ellipse cx="1112" cy="637" rx="12" ry="10"/><ellipse cx="1273" cy="648" rx="38" ry="14"/><ellipse cx="1293" cy="682" rx="12" ry="10"/><ellipse cx="1190" cy="738" rx="30" ry="14"/><ellipse cx="165" cy="535" rx="45" ry="13"/><ellipse cx="37" cy="505" rx="20" ry="20"/><ellipse cx="420" cy="631" rx="30" ry="13"/><ellipse cx="577" cy="708" rx="22" ry="15"/><ellipse cx="570" cy="120" rx="15" ry="15"/><ellipse cx="120" cy="700" rx="25" ry="10"/><ellipse cx="60" cy="620" rx="30" ry="12"/><ellipse cx="300" cy="610" rx="20" ry="10"/><ellipse cx="1330" cy="570" rx="20" ry="30"/></g><g filter="url(#soft)"><polygon points="399,0 438,0 426,24 414,54 402,78 384,99 366,120 360,141 333,147 324,132 336,114 330,90 345,66 369,45 387,24" fill="#0e1a1c" /><polygon points="249,210 261,192 285,174 306,160 316,171 312,186 294,198 270,216 252,222" fill="#0e1a1c" /><polygon points="156,228 210,234 195,249 156,240" fill="#0e1a1c" /><polygon points="249,303 270,294 300,282 345,264 375,258 420,252 465,246 510,240 555,240 585,237 600,240 609,270 600,300 570,306 540,312 510,318 480,324 465,348 450,336 420,345 390,360 360,360 315,357 285,330 264,321" fill="#0e1a1c" /><polygon points="444,207 468,195 510,198 555,210 600,216 645,210 680,201 680,234 630,234 570,228 525,231 480,219 447,213" fill="#0e1a1c" /><polygon points="609,237 680,234 669,270 645,288 618,297 612,270" fill="#0e1a1c" /><polygon points="450,444 468,420 495,399 525,387 555,378 600,372 680,360 680,387 600,399 564,417 555,453 450,453" fill="#0e1a1c" /><polygon points="973,76 1026,94 1062,72 1136,66 1172,50 1227,42 1257,30 1297,22 1299,40 1277,60 1247,68 1207,86 1166,113 1126,125 1086,123 1076,153 1106,161 1116,181 1026,201 905,191 905,141 945,121 965,97" fill="#0e1a1c" /><polygon points="1337,0 1361,0 1361,22 1345,18" fill="#0e1a1c" /><polygon points="680,198 710,195 731,222 770,216 812,210 848,189 884,180 908,144 950,129 995,120 1004,144 1040,162 1070,168 1100,186 1124,207 1070,204 1025,210 1010,234 980,240 959,258 935,249 908,264 875,264 848,276 818,297 809,285 824,258 794,240 740,240 725,258 698,246 680,246" fill="#0e1a1c" /><polygon points="680,246 710,240 740,255 755,285 770,315 755,336 725,330 710,300 680,285" fill="#0e1a1c" /><polygon points="1124,207 1160,168 1205,156 1250,141 1295,135 1361,126 1361,264 1326,267 1296,288 1250,300 1205,306 1184,330 1175,375 1148,405 1115,429 1079,453 1022,453 1040,420 1064,387 1079,345 1085,306 1106,279 1145,258 1190,240 1220,228 1190,210" fill="#0e1a1c" /><polygon points="1220,378 1266,360 1311,375 1341,405 1326,435 1281,444 1235,426" fill="#0e1a1c" /><polygon points="710,390 755,375 800,381 785,420 740,453 710,453" fill="#0e1a1c" /><polygon points="1109,0 1130,0 1155,30 1150,38 1125,20" fill="#0e1a1c" /><polygon points="306,531 330,507 351,483 384,477 420,471 465,462 510,453 582,453 576,483 540,513 510,507 474,537 444,543 429,561 408,549 396,528 375,528 354,537 321,543" fill="#0e1a1c" /><polygon points="300,573 315,561 336,573 351,588 369,621 366,648 354,669 339,693 324,690 327,663 339,639 336,609 324,588 303,582" fill="#0e1a1c" /><polygon points="222,714 255,693 282,678 306,675 300,699 285,717 279,738 255,753 231,750 228,729" fill="#0e1a1c" /><polygon points="0,702 30,693 60,675 87,657 75,687 45,717 15,729 0,732" fill="#0e1a1c" /><polygon points="45,768 75,738 114,726 147,735 126,753 90,771 54,777" fill="#0e1a1c" /><polygon points="0,843 60,837 120,831 180,837 216,819 246,798 270,777 300,765 330,771 360,789 390,798 405,813 390,831 345,837 300,843 270,855 285,873 261,882 234,879 210,867 180,879 165,897 120,891 60,879 0,873" fill="#0e1a1c" /><polygon points="447,702 480,708 510,702 516,729 495,747 471,741 450,723" fill="#0e1a1c" /><polygon points="525,741 555,732 585,741 615,729 660,732 660,768 615,777 585,792 555,777 528,762" fill="#0e1a1c" /><polygon points="453,798 480,777 510,780 534,810 495,813 468,825 456,813" fill="#0e1a1c" /><polygon points="842,453 980,453 1004,471 1016,498 998,528 992,558 983,579 956,594 941,606 890,621 848,630 830,609 848,585 869,561 872,537 848,525 836,498 848,471" fill="#0e1a1c" /><polygon points="1040,567 1100,561 1190,549 1250,534 1311,528 1361,522 1361,594 1281,591 1236,582 1160,585 1100,597 1064,621 1076,648 1055,663 1034,639 1025,609 1010,582" fill="#0e1a1c" /><polygon points="1040,453 1361,453 1361,590 1040,590" fill="#0e1a1c" /><polygon points="701,648 725,633 755,639 794,648 800,675 770,684 725,678 704,663" fill="#0e1a1c" /><polygon points="740,726 785,723 806,705 830,723 830,741 800,747 770,753 746,741" fill="#0e1a1c" /><polygon points="1052,747 1085,777 1115,813 1130,837 1160,843 1205,867 1190,879 1145,873 1115,858 1070,843 1040,828 1010,807 992,792 1025,795 1064,807 1085,819 1106,813 1085,783" fill="#0e1a1c" /><polygon points="1124,783 1145,762 1175,762 1214,792 1223,813 1205,837 1175,828 1145,813 1127,798" fill="#0e1a1c" /><polygon points="800,795 830,777 866,774 872,807 848,825 821,822" fill="#0e1a1c" /><polygon points="758,861 785,843 815,843 860,852 890,873 920,888 914,905 758,905" fill="#0e1a1c" /><polygon points="1332,690 1361,680 1361,745 1335,735" fill="#0e1a1c" /><ellipse cx="540" cy="354" rx="21" ry="9" fill="#0e1a1c"/><ellipse cx="177" cy="97" rx="15" ry="17" fill="#0e1a1c"/><ellipse cx="234" cy="84" rx="24" ry="8" fill="#0e1a1c"/><ellipse cx="505" cy="165" rx="14" ry="9" fill="#0e1a1c"/><ellipse cx="399" cy="443" rx="12" ry="10" fill="#0e1a1c"/><ellipse cx="692" cy="367" rx="14" ry="22" fill="#0e1a1c"/><ellipse cx="860" cy="440" rx="30" ry="16" fill="#0e1a1c"/><ellipse cx="698" cy="132" rx="8" ry="8" fill="#0e1a1c"/><ellipse cx="1002" cy="34" rx="6" ry="10" fill="#0e1a1c"/><ellipse cx="770" cy="12" rx="12" ry="12" fill="#0e1a1c"/><ellipse cx="816" cy="4" rx="14" ry="5" fill="#0e1a1c"/><ellipse cx="196" cy="580" rx="20" ry="17" fill="#0e1a1c"/><ellipse cx="240" cy="655" rx="9" ry="14" fill="#0e1a1c"/><ellipse cx="1221" cy="695" rx="8" ry="8" fill="#0e1a1c"/><ellipse cx="1052" cy="895" rx="18" ry="10" fill="#0e1a1c"/><polygon points="1106,453 1196,453 1202,471 1175,483 1130,480 1109,468" fill="#36503a" /><polygon points="1064,504 1100,498 1145,489 1175,507 1160,531 1115,552 1076,555 1058,537" fill="#36503a" /><polygon points="1175,492 1220,486 1266,489 1296,498 1281,522 1245,534 1205,534 1178,519" fill="#36503a" /><polygon points="1335,498 1361,492 1361,543 1341,540 1332,519" fill="#36503a" /><polygon points="1341,453 1361,453 1361,489 1345,485" fill="#36503a" /><polygon points="1090,125 1130,124 1166,117 1150,141 1118,160 1096,158 1084,142" fill="#36503a" /><polygon points="1227,118 1260,95 1300,84 1307,100 1280,120 1240,127" fill="#1f3433" /><polygon points="1296,140 1330,128 1361,120 1361,210 1330,190 1300,160" fill="#5d6866" /><polygon points="1326,62 1361,55 1361,85 1332,82" fill="#6d7572" /><polygon points="699,462 727,460 749,467 752,478 738,481 721,490 710,501 705,525 715,532 730,535 749,545 771,562 791,573 788,584 771,584 749,573 727,567 708,556 690,545 675,532 665,510 663,490 672,474 685,466" fill="#1e2e27" /><polygon points="959,681 980,663 1010,657 1034,687 1025,705 995,717 965,723 956,702" fill="#1e2e27" /><ellipse cx="882" cy="710" rx="29" ry="19" fill="#1f3030"/></g><polyline points="776,0 782,15 830,30 836,39 857,21 902,21 904,30 890,48 910,141 1019,153 1130,195 1187,191 1256,207 1266,249 1178,279 1082,453 1076,492 1046,531 1064,576 1190,558 1361,560" fill="none" stroke="#d8cf52" stroke-width="1.3" stroke-linejoin="round" stroke-linecap="round" stroke-dasharray="3 2"/><polyline points="322,546 349,590 361,639 346,677 283,710 284,741 268,768 268,816 260,821" fill="none" stroke="#cc2b2b" stroke-width="3.5" stroke-linejoin="round" stroke-linecap="round" /><polyline points="327,537 349,523 377,502 389,501 399,508 444,538" fill="none" stroke="#cc2b2b" stroke-width="3.5" stroke-linejoin="round" stroke-linecap="round" /><polyline points="391,459 395,471 390,480 369,485 351,518 326,536 315,563 345,587 357,639 342,675 279,708 280,741 264,768 264,816 258,819 243,828 231,843 240,855 235,861" fill="none" stroke="#d2eef5" stroke-width="3.2" stroke-linejoin="round" stroke-linecap="round" /><polyline points="390,480 395,505 402,515 430,542 441,543 444,539" fill="none" stroke="#d2eef5" stroke-width="3.2" stroke-linejoin="round" stroke-linecap="round" /><polyline points="510,492 549,465 561,453 564,417 600,399 660,385 680,387 695,387 707,408 749,441 752,453 749,453 704,522 737,591 737,609 761,642 863,642 917,609 944,603 980,567 995,522 980,525 977,521" fill="none" stroke="#f2e43a" stroke-width="3.5" stroke-linejoin="round" stroke-linecap="round" /><polyline points="444,531 477,520 484,507 509,491 512,480 533,465 549,443 558,402 558,378 537,375 534,306 555,298 591,307 606,303 600,288 610,270 594,249 603,234 633,231 680,210 695,207 728,230 770,221 785,222 815,216 836,201 860,188 884,183" fill="none" stroke="#5fd3e3" stroke-width="3.5" stroke-linejoin="round" stroke-linecap="round" /><polyline points="574,228 588,231 603,234" fill="none" stroke="#5fd3e3" stroke-width="3.5" stroke-linejoin="round" stroke-linecap="round" /><polyline points="884,183 950,204 959,195 1031,200 1049,192 1115,192 1148,204 1184,204 1196,213 1223,222 1220,237 1160,261 1124,279 1091,309 1079,360 1064,387 1061,408 1034,420 1025,444 1010,450 974,432 956,453 953,453 932,471 926,480 929,495 953,507 971,516 980,519" fill="none" stroke="#9630e0" stroke-width="3.5" stroke-linejoin="round" stroke-linecap="round" /><polyline points="884,183 904,146 920,129 920,87" fill="none" stroke="#86f04a" stroke-width="3.8" stroke-linejoin="round" stroke-linecap="round" /><polyline points="904,146 895,84 899,75 887,65 866,50 844,45 830,41 827,35" fill="none" stroke="#86f04a" stroke-width="3.8" stroke-linejoin="round" stroke-linecap="round" /><polyline points="899,87 920,102" fill="none" stroke="#86f04a" stroke-width="3.8" stroke-linejoin="round" stroke-linecap="round" /><text x="479" y="437.7" font-size="16.5" fill="#e9eef0" letter-spacing="0.3" filter="url(#lbl)">New York Island</text><text x="493" y="463.5" font-size="16.5" fill="#e9eef0" letter-spacing="0.3" filter="url(#lbl)">Gary Island</text><text x="985" y="190.7" font-size="16.5" fill="#e9eef0" letter-spacing="0.3" filter="url(#lbl)">Hausons Island</text><text x="982" y="443.8" font-size="16.5" fill="#e9eef0" letter-spacing="0.3" filter="url(#lbl)">Indian Grave Island</text><text x="862" y="483" font-size="16.5" fill="#e9eef0" letter-spacing="0.3" filter="url(#lbl)">Half Dog Island</text><text x="928" y="504.6" font-size="16.5" fill="#e9eef0" letter-spacing="0.3" filter="url(#lbl)">Washington Island</text><text x="976" y="563.5" font-size="16.5" fill="#e9eef0" letter-spacing="0.3" filter="url(#lbl)">Lincoln Island</text><text x="835" y="595.6" font-size="16.5" fill="#e9eef0" letter-spacing="0.3" filter="url(#lbl)">Canoe Island</text><text x="937" y="600" font-size="16.5" fill="#e9eef0" letter-spacing="0.3" filter="url(#lbl)">Norway Island</text><text x="1030" y="606.7" font-size="16.5" fill="#e9eef0" letter-spacing="0.3" filter="url(#lbl)">Squirrel Island</text><text x="232" y="826" font-size="16.5" fill="#e9eef0" letter-spacing="0.3" filter="url(#lbl)">Mile Island</text><text x="301" y="834" font-size="16.5" fill="#e9eef0" letter-spacing="0.3" filter="url(#lbl)">Charlies Island</text><text x="653" y="568.5" font-size="26.5" fill="#000">Text</text><text x="2" y="849" font-size="26" fill="#fff" letter-spacing="-0.6" filter="url(#lbl)">Google Earth</text><text x="1" y="879" font-size="12" fill="#ddd" letter-spacing="-0.4" filter="url(#lbl)">©2017 Google</text><text x="1" y="897" font-size="12" fill="#ddd" letter-spacing="-0.8" filter="url(#lbl)">Image © 2017 DigitalGlobe</text><path d="M1081 881 V900 H1357 V881" fill="none" stroke="#f0f0f0" stroke-width="2"/><text x="1204" y="896" font-size="15" fill="#eee">3 mi</text><path d="M1331 816 L1315 843 L1325 838 L1329 852 Z" fill="#fff" filter="url(#lbl)"/><text x="1300" y="870" font-size="26" font-family="Liberation Serif" font-style="italic" fill="#fff" filter="url(#lbl)">N</text><rect x="6" y="6" width="276" height="72" fill="#e9eae9"/><text x="16" y="38" font-size="23.5" font-weight="700" fill="#222">Boundary Waters Trip</text><text x="16" y="64" font-size="14.3" fill="#555">Six days in BWCA</text><rect x="7" y="83" width="148" height="212" fill="#e9eae9"/><text x="16" y="107.7" font-size="16" font-weight="700" fill="#222">Legend</text><text x="46.5" y="134.8" font-size="14.2" fill="#444">Day 1</text><g fill="none" stroke="#7fbfc8" stroke-width="1.2"><circle cx="25" cy="123.80000000000001" r="2.6"/><circle cx="21" cy="131.8" r="2.6"/><circle cx="31" cy="131.8" r="2.6"/></g><text x="46.5" y="158.3" font-size="14.2" fill="#444">Day 2</text><g fill="none" stroke="#c9c24a" stroke-width="1.2"><circle cx="25" cy="147.3" r="2.6"/><circle cx="21" cy="155.3" r="2.6"/><circle cx="31" cy="155.3" r="2.6"/></g><text x="46.5" y="181.8" font-size="14.2" fill="#444">Day 3</text><g fill="#8a2fc0" stroke="#8a2fc0" stroke-width="1.2"><circle cx="25" cy="170.8" r="2.6"/><circle cx="21" cy="178.8" r="2.6"/><circle cx="31" cy="178.8" r="2.6"/></g><text x="46.5" y="205.3" font-size="14.2" fill="#444">Day 4</text><g fill="none" stroke="#78b848" stroke-width="1.2"><circle cx="25" cy="194.3" r="2.6"/><circle cx="21" cy="202.3" r="2.6"/><circle cx="31" cy="202.3" r="2.6"/></g><text x="46.5" y="228.8" font-size="14.2" fill="#444">Day 5</text><g fill="none" stroke="#3fb8c8" stroke-width="1.2"><circle cx="25" cy="217.8" r="2.6"/><circle cx="21" cy="225.8" r="2.6"/><circle cx="31" cy="225.8" r="2.6"/></g><text x="46.5" y="252.3" font-size="14.2" fill="#444">Day 6</text><g fill="#c8303a" stroke="#c8303a" stroke-width="1.2"><circle cx="25" cy="241.3" r="2.6"/><circle cx="21" cy="249.3" r="2.6"/><circle cx="31" cy="249.3" r="2.6"/></g><text x="46.5" y="275.8" font-size="14.2" fill="#444">Entry Point 24</text><path d="M26 261.8 L20 270.8 L23 270.8 L19 276.8 L33 276.8 L29 270.8 L32 270.8 Z" fill="#a8f0a0" stroke="#3a8a3a" stroke-width="1.3"/><path d="M234 855 L229 863 L231 863 L228 868 L240 868 L237 863 L239 863 Z" fill="#a8f0a0" stroke="#3a8a3a" stroke-width="0.8"/></svg>
<div class="a" style="left:1375px;top:438px;width:2111px;height:1984px;overflow:hidden;">
<div class="a" style="left:220px;top:1161.8px;width:1361px;font-size:31.6px;line-height:31.6px;color:#000;white-space:nowrap;text-align:justify;text-align-last:justify;">Curabitur bibendum ante urna, sed blandit libero egestas id. Pellentesque rhoncus elit in lacus</div>
<div class="a" style="left:220px;top:1198.3px;width:1361px;font-size:31.6px;line-height:31.6px;color:#000;white-space:nowrap;text-align:justify;text-align-last:justify;">ultrices fringilla. Nam ac metus eu turpis mattis rutrum. Mauris mattis sem ex, facilisis molestie</div>
<div class="a" style="left:220px;top:1234.8px;width:1361px;font-size:31.6px;line-height:31.6px;color:#000;white-space:nowrap;text-align:justify;text-align-last:justify;">sapien luctus non. Vestibulum tincidunt urna at odio suscipit, vel congue felis cursus. Etiam tellus</div>
<div class="a" style="left:220px;top:1271.3px;width:1361px;font-size:31.6px;line-height:31.6px;color:#000;white-space:nowrap;text-align:left;">magna, egestas ac suscipit in, laoreet quis felis. Proin non orci id dui tincidunt egestas.</div>
<div class="a" style="left:220px;top:1341.3px;width:1361px;font-size:31.6px;line-height:31.6px;color:#000;white-space:nowrap;text-align:justify;text-align-last:justify;">Vestibulum eleifend, ligula a scelerisque vehicula, risus justo ultricies ligula, et interdum lorem ex</div>
<div class="a" style="left:220px;top:1377.8px;width:1361px;font-size:31.6px;line-height:31.6px;color:#000;white-space:nowrap;text-align:justify;text-align-last:justify;word-spacing:-0.6px;">eget ex. Duis dignissim lacus vitae velit laoreet, vitae placerat velit aliquet. Etiam eget mollis nulla,</div>
<div class="a" style="left:220px;top:1414.3px;width:1361px;font-size:31.6px;line-height:31.6px;color:#000;white-space:nowrap;text-align:justify;text-align-last:justify;">ac vehicula mi. Etiam non sollicitudin velit, imperdiet commodo mi. Fusce quis tellus tellus. Donec</div>
<div class="a" style="left:220px;top:1450.8px;width:1361px;font-size:31.6px;line-height:31.6px;color:#000;white-space:nowrap;text-align:justify;text-align-last:justify;">dictum euismod risus non tempus. Duis quis pellentesque nunc. Praesent elementum</div>
<div class="a" style="left:220px;top:1487.3px;width:1361px;font-size:31.6px;line-height:31.6px;color:#000;white-space:nowrap;text-align:left;">condimentum mollis.</div>
<div class="a" style="left:220px;top:1557.3px;width:1361px;font-size:31.6px;line-height:31.6px;color:#000;white-space:nowrap;text-align:justify;text-align-last:justify;">Phasellus dapibus quam a hendrerit placerat. Sed ultrices blandit nulla sed sodales. Nunc quis</div>
<div class="a" style="left:220px;top:1593.8px;width:1361px;font-size:31.6px;line-height:31.6px;color:#000;white-space:nowrap;text-align:justify;text-align-last:justify;">volutpat eros. Etiam bibendum eu tellus consequat blandit. Curabitur lacinia cursus diam sed</div>
<div class="a" style="left:220px;top:1630.3px;width:1361px;font-size:31.6px;line-height:31.6px;color:#000;white-space:nowrap;text-align:justify;text-align-last:justify;">pharetra. Proin molestie tristique mauris ut aliquam. Donec purus odio, molestie id suscipit sit</div>
<div class="a" style="left:220px;top:1666.8px;width:1361px;font-size:31.6px;line-height:31.6px;color:#000;white-space:nowrap;text-align:justify;text-align-last:justify;">amet, porttitor in erat. Vestibulum ut tellus vel mi lobortis porta nec vel tellus. Quisque pretium</div>
<div class="a" style="left:220px;top:1703.3px;width:1361px;font-size:31.6px;line-height:31.6px;color:#000;white-space:nowrap;text-align:justify;text-align-last:justify;">blandit dignissim. Proin eu metus convallis sapien efficitur mollis. Nunc luctus ex in nunc ornare,</div>
<div class="a" style="left:220px;top:1739.8px;width:1361px;font-size:31.6px;line-height:31.6px;color:#000;white-space:nowrap;text-align:justify;text-align-last:justify;">nec blandit orci faucibus. Aenean bibendum mi vel neque euismod hendrerit. Vestibulum ac</div>
<div class="a" style="left:220px;top:1776.3px;width:1361px;font-size:31.6px;line-height:31.6px;color:#000;white-space:nowrap;text-align:justify;text-align-last:justify;">pharetra magna. Ut rutrum, orci at blandit faucibus, justo mauris iaculis mauris, ut tempor lectus</div>
<div class="a" style="left:220px;top:1812.8px;width:1361px;font-size:31.6px;line-height:31.6px;color:#000;white-space:nowrap;text-align:left;">risus at ligula.</div>
<div class="a" style="left:220px;top:1882.8px;width:1361px;font-size:31.6px;line-height:31.6px;color:#000;white-space:nowrap;text-align:justify;text-align-last:justify;">Duis non tincidunt purus. Nam quis sapien risus. Donec mattis convallis tempor. Fusce aliquam</div>
<div class="a" style="left:220px;top:1919.3px;width:1361px;font-size:31.6px;line-height:31.6px;color:#000;white-space:nowrap;text-align:justify;text-align-last:justify;">aliquet eros, nec rutrum lectus pretium at. Praesent blandit justo a mi dignissim placerat. Ut</div>
<div class="a" style="left:220px;top:1955.8px;width:1361px;font-size:31.6px;line-height:31.6px;color:#000;white-space:nowrap;text-align:left;">ullamcorper elit eget diam maximus iaculis. In bibendum in massa eget facilisis. In iaculis lectus</div>
</div>
</div></div></body></html>
